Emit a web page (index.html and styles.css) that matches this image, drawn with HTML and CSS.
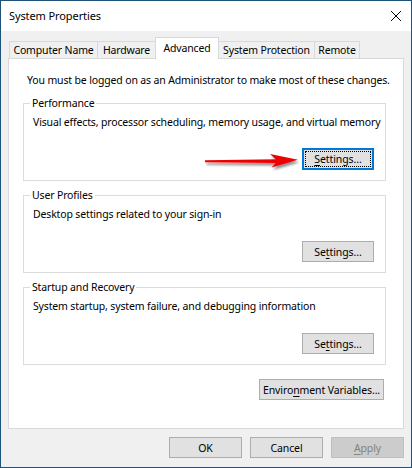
FILE: index.html
```html
<!DOCTYPE html>
<html>
<head>
<meta charset="utf-8">
<title>System Properties</title>
<link rel="stylesheet" href="styles.css">
</head>
<body>
<div class="window">
  <div class="titlebar">
    <span class="title">System Properties</span>
    <svg class="close" width="12" height="12" viewBox="0 0 12 12"><path d="M1 1 L11 11 M11 1 L1 11" stroke="#000" stroke-width="1"/></svg>
  </div>
  <div class="client">
    <div class="tabs">
      <div class="tab tab-cn">Computer Name</div>
      <div class="tab tab-hw">Hardware</div>
      <div class="tab tab-adv selected">Advanced</div>
      <div class="tab tab-sp">System Protection</div>
      <div class="tab tab-rm">Remote</div>
    </div>
    <div class="panel">
      <p class="note">You must be logged on as an Administrator to make most of these changes.</p>

      <div class="group">
        <div class="group-title"><span>Performance</span></div>
        <p class="desc">Visual effects, processor scheduling, memory usage, and virtual memory</p>
        <div class="actions">
          <svg class="arrow" width="96" height="24" viewBox="0 0 96 24">
            <defs>
              <filter id="sh" x="-10%" y="-40%" width="130%" height="200%">
                <feDropShadow dx="1.5" dy="2.5" stdDeviation="1.2" flood-color="#000" flood-opacity="0.45"/>
              </filter>
            </defs>
            <g filter="url(#sh)">
              <polygon points="2,12.3 74,11.2 74,15 2,14.3" fill="#ee0000"/>
              <polygon points="67,6 95,11.7 68.5,19.5 74.5,13" fill="#ee0000"/>
            </g>
          </svg>
          <button class="btn btn-settings focused"><span class="focus-rect"><u>S</u>ettings...</span></button>
        </div>
      </div>

      <div class="group">
        <div class="group-title"><span>User Profiles</span></div>
        <p class="desc">Desktop settings related to your sign-in</p>
        <div class="actions">
          <button class="btn btn-settings">Se<u>t</u>tings...</button>
        </div>
      </div>

      <div class="group">
        <div class="group-title"><span>Startup and Recovery</span></div>
        <p class="desc">System startup, system failure, and debugging information</p>
        <div class="actions">
          <button class="btn btn-settings">Se<u>t</u>tings...</button>
        </div>
      </div>

      <div class="env-row">
        <button class="btn btn-env">Enviro<u>n</u>ment Variables...</button>
      </div>
    </div>
    <div class="footer">
      <button class="btn btn-dlg">OK</button>
      <button class="btn btn-dlg">Cancel</button>
      <button class="btn btn-dlg disabled"><u>A</u>pply</button>
    </div>
  </div>
</div>
</body>
</html>
```

FILE: styles.css
```css
html, body {
  margin: 0;
  padding: 0;
  background: #ffffff;
}

body {
  font-family: "Noto Sans", "Open Sans", sans-serif;
  font-size: 10.5px;
  letter-spacing: -0.15px;
  line-height: 16px;
  color: #000000;
}

.window {
  width: 412px;
  height: 468px;
  box-sizing: border-box;
  border: 1px solid #1d527a;
  background: #f0f0f0;
  display: flex;
  flex-direction: column;
}

.titlebar {
  height: 30px;
  flex: none;
  background: #ffffff;
  display: flex;
  align-items: center;
  justify-content: space-between;
  padding: 0 9px 0 8px;
  font-size: 11px;
  letter-spacing: -0.1px;
}

.title {
  line-height: 16px;
}

.close {
  display: block;
  margin-top: -1px;
}

.client {
  flex: 1;
  padding: 6px 7px 0 7px;
  display: flex;
  flex-direction: column;
}

.tabs {
  display: flex;
  align-items: flex-end;
  height: 22px;
  padding-left: 1px;
  margin-bottom: -1px;
}

.tab {
  box-sizing: border-box;
  height: 17px;
  margin-bottom: 1px;
  border: 1px solid #d9d9d9;
  border-bottom: none;
  background: #f0f0f0;
  text-align: center;
  line-height: 16px;
  white-space: nowrap;
  margin-left: -1px;
}

.tab:first-child {
  margin-left: 0;
}

.tab-cn { width: 89px; }
.tab-hw { width: 59px; }
.tab-adv { width: 64px; }
.tab-sp { width: 97px; }
.tab-rm { width: 46px; }

.tab.selected {
  height: 22px;
  margin-bottom: 0;
  background: #ffffff;
  padding-top: 2px;
  position: relative;
  z-index: 1;
}

.panel {
  background: #ffffff;
  border: 1px solid #d9d9d9;
  padding: 0 0 28px 0;
}

.note {
  margin: 13px 0 0 18px;
  white-space: nowrap;
}

.group {
  margin: 15px 17px 0 14px;
  border: 1px solid #dcdcdc;
  padding: 0 0 10px 0;
}

.group + .group {
  margin-top: 14px;
}

.group-title {
  margin-top: -9px;
  line-height: 16px;
  height: 16px;
}

.group-title span {
  background: #ffffff;
  padding: 0 2px;
  margin-left: 6px;
}

.desc {
  margin: 3px 0 0 9px;
  white-space: nowrap;
}

.actions {
  margin-top: 19px;
  height: 21px;
  display: flex;
  align-items: flex-end;
  justify-content: flex-end;
  padding-right: 11px;
}

.arrow {
  display: block;
  align-self: center;
  flex: none;
  margin-right: 3px;
}

.btn {
  box-sizing: border-box;
  height: 21px;
  margin: 0;
  padding: 0;
  border: 1px solid #adadad;
  background: #e1e1e1;
  font-family: inherit;
  font-size: 10.5px;
  letter-spacing: -0.1px;
  line-height: 16px;
  color: #000000;
  text-align: center;
  white-space: nowrap;
  flex: none;
}

.btn u {
  text-decoration: underline;
  text-underline-offset: 2px;
}

.btn-settings {
  width: 72px;
}

.btn.focused {
  border: 1px solid #0078d7;
  box-shadow: inset 0 0 0 1px #0078d7;
  padding: 2px;
  height: 22px;
}

.focus-rect {
  display: block;
  height: 100%;
  box-sizing: border-box;
  border: 1px dotted #000000;
  line-height: 14px;
}

.env-row {
  margin-top: 14px;
  display: flex;
  justify-content: flex-end;
  padding-right: 19px;
}

.btn-env {
  width: 125px;
}

.footer {
  margin-top: 8px;
  display: flex;
  justify-content: flex-end;
  gap: 8px;
}

.btn-dlg {
  width: 73px;
}

.btn.disabled {
  background: #cccccc;
  border-color: #bfbfbf;
  color: #838383;
}
```
